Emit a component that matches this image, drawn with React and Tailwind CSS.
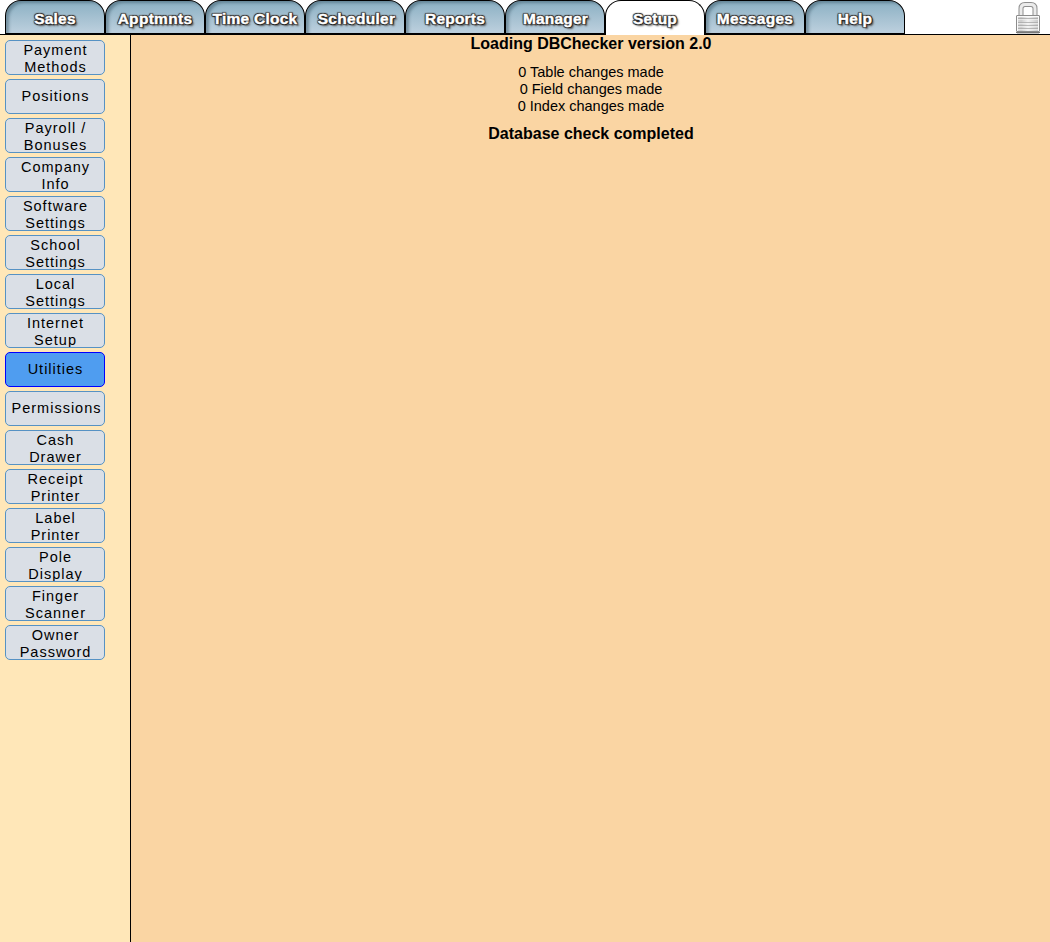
const tabs = [
  { label: 'Sales', className: 'tracking-[0.2px]' },
  { label: 'Apptmnts', className: 'tracking-[0.3px]' },
  { label: 'Time Clock', className: 'tracking-[0.25px]' },
  { label: 'Scheduler', className: 'tracking-[0.3px] pl-[3px]' },
  { label: 'Reports', className: 'tracking-[0.2px]' },
  { label: 'Manager', className: 'tracking-[0.2px] pl-px' },
  { label: 'Setup', className: 'tracking-[0.2px]', active: true },
  { label: 'Messages', className: 'tracking-[0.3px]' },
  { label: 'Help', className: 'tracking-[0.2px]' },
];

const menu = [
  ['Payment', 'Methods'],
  ['Positions'],
  ['Payroll /', 'Bonuses'],
  ['Company', 'Info'],
  ['Software', 'Settings'],
  ['School', 'Settings'],
  ['Local', 'Settings'],
  ['Internet', 'Setup'],
  ['Utilities'],
  ['Permissions'],
  ['Cash', 'Drawer'],
  ['Receipt', 'Printer'],
  ['Label', 'Printer'],
  ['Pole', 'Display'],
  ['Finger', 'Scanner'],
  ['Owner', 'Password'],
];

const tabText =
  'text-white [-webkit-text-stroke:0.4px_white] [text-shadow:1px_0_0_#222,-1px_0_0_#333,0_1px_0_#222,0_-1px_0_#333,1px_1px_1px_#222,-1px_1px_1px_#444,1px_-1px_1px_#444,-1px_-1px_1px_#444,2px_2px_2px_#555]';

function Tab({ label, className, active }) {
  const shape = active
    ? 'border-b-0 bg-white'
    : 'border-b-2 bg-linear-to-b from-[#8bb0c3] to-[#bdd0de] shadow-[inset_3px_2px_3px_rgba(50,80,95,0.45)]';
  return (
    <button
      className={`flex h-[35px] w-[100px] shrink-0 items-start justify-center rounded-t-[16px] border border-black pt-[9px] text-[15.5px] leading-[18px] font-bold ${shape}`}
    >
      <span className={`whitespace-nowrap ${tabText} ${className}`}>{label}</span>
    </button>
  );
}

function Padlock() {
  return (
    <svg className="shrink-0" width="26" height="34" viewBox="0 0 26 34" aria-label="Lock">
      <defs>
        <linearGradient id="lock-body" x1="0" x2="1" y1="0" y2="0">
          <stop offset="0" stopColor="#dcdcdc" />
          <stop offset=".2" stopColor="#cccccc" />
          <stop offset=".5" stopColor="#f2f2f2" />
          <stop offset="1" stopColor="#c4c4c4" />
        </linearGradient>
      </defs>
      <path d="M6 16V8.500q0-4 4-4h6q4 0 4 4V16" fill="none" stroke="#8e8e8e" strokeWidth="5" />
      <path d="M6 16V8.500q0-4 4-4h6q4 0 4 4V16" fill="none" stroke="#ebebeb" strokeWidth="3" />
      <path d="M1 32.500h24" stroke="#777" />
      <path d="M2 33.500h22" stroke="#ccc" />
      <rect x="1.500" y="15.500" width="23" height="16" rx=".5" fill="url(#lock-body)" stroke="#8c8c8c" />
      <path d="M2 16.500h22M2.500 17v14M23.500 17v14" stroke="#fafafa" />
      <path d="M3 18.500h20M3 22.500h20M3 25.500h20M3 28.500h20" stroke="#a6a6a6" opacity=".75" />
      <path d="M3 19.500h20M3 23.500h20M3 26.500h20M3 29.500h20" stroke="#f4f4f4" opacity=".6" />
    </svg>
  );
}

export default function App() {
  return (
    <div className="flex h-[942px] w-full flex-col overflow-hidden bg-white font-['Liberation_Sans',Arial,sans-serif] text-black">
      <header className="flex h-[35px] shrink-0 items-start justify-between border-b border-black pr-[9px] pl-[5px]">
        <nav className="flex">
          {tabs.map((tab) => (
            <Tab key={tab.label} {...tab} />
          ))}
        </nav>
        <Padlock />
      </header>
      <div className="flex min-h-0 flex-1">
        <aside className="flex w-[131px] shrink-0 flex-col gap-[4px] border-r border-black bg-[#ffe7b8] pt-[5px] pl-[5px]">
          {menu.map((lines) => (
            <button
              key={lines.join(' ')}
              className={`flex h-[35px] w-[100px] shrink-0 flex-col items-center overflow-hidden rounded-[5px] border text-[14.5px] leading-[17px] tracking-[1px] ${
                lines.length === 1 ? 'justify-center pb-px' : 'justify-start pt-px'
              } ${lines[0] === 'Permissions' ? 'pl-[3px]' : 'pl-px'} ${
                lines[0] === 'Utilities' ? 'border-[#0000ff] bg-[#4f9df0]' : 'border-[#5692c4] bg-[#dadfe6]'
              }`}
            >
              {lines.map((line) => (
                <span key={line} className="block whitespace-nowrap">{line}</span>
              ))}
            </button>
          ))}
        </aside>
        <main className="flex-1 bg-[#fad5a3] pl-px text-center text-[14.5px] leading-[17px]">
          <h1 className="text-[16px] leading-[18px] font-bold">Loading DBChecker version 2.0</h1>
          <div className="mt-[11px]">
            <p>0 Table changes made</p>
            <p>0 Field changes made</p>
            <p>0 Index changes made</p>
          </div>
          <h2 className="mt-[10px] text-[16px] leading-[18px] font-bold">Database check completed</h2>
        </main>
      </div>
    </div>
  );
}
